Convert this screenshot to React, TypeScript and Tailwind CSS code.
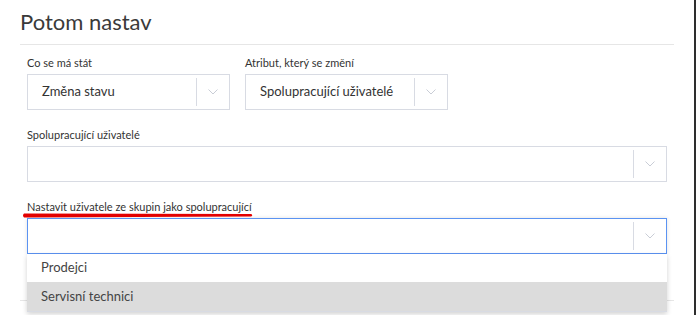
import React from "react";

const FONT = { fontFamily: "Lato, 'Noto Sans', sans-serif" };

function Chevron() {
  return (
    <svg width="10" height="6" viewBox="0 0 10 6" className="block">
      <path d="M0.5 0.5 L5 5 L9.5 0.5" fill="none" stroke="#c9cdd6" strokeWidth="1" />
    </svg>
  );
}

function Select({ value, width, focused }: { value?: string; width: string; focused?: boolean }) {
  return (
    <div
      className={
        "flex h-[36px] items-stretch bg-white border " +
        width +
        (focused ? " border-[#5b93f2] shadow-[0_0_4px_rgba(0,0,0,0.12)]" : " border-[#d8dbe3]")
      }
    >
      <div className="flex flex-1 items-center pl-[14px] text-[13px] text-[#333]">{value}</div>
      <div className="my-[3px] w-px bg-[#d8dbe3]" />
      <div className="flex w-[32px] items-center justify-center">
        <Chevron />
      </div>
    </div>
  );
}

function Field({ label, children }: { label: string; children: React.ReactNode }) {
  return (
    <div className="flex flex-col">
      <label className="mb-[4px] text-[11px] leading-[15px] text-[#333]">{label}</label>
      {children}
    </div>
  );
}

// red pen stroke under the last label
function Underline() {
  return (
    <svg width="232" height="5" viewBox="0 0 232 5" className="absolute left-[-5px] top-[14px]">
      <path d="M2 0.6 L229 0.9 Q231.5 2 229 3.6 L2 4.6 Q0 2.6 2 0.6 Z" fill="#e30000" />
    </svg>
  );
}

export default function App() {
  return (
    <div className="flex h-[315px] w-[696px] overflow-hidden bg-white" style={FONT}>
      <div className="relative w-[694px] px-[20px]">
        <div className="h-[45px] border-b border-[#e6e6e6]">
          <h1 className="pt-[7px] text-[22px] leading-[29px] text-[#3a3a3a]">Potom nastav</h1>
        </div>

        <div className="h-[256px] border-b border-[#e6e6e6] px-[7px] pt-[10px]">
          <div className="flex gap-[15px]">
            <Field label="Co se má stát">
              <Select value="Změna stavu" width="w-[203px]" />
            </Field>
            <Field label="Atribut, který se změní">
              <Select value="Spolupracující uživatelé" width="w-[203px]" />
            </Field>
          </div>

          <div className="mt-[17px]">
            <Field label="Spolupracující uživatelé">
              <Select width="w-full" />
            </Field>
          </div>

          <div className="relative mt-[17px]">
            <Field label="Nastavit uživatele ze skupin jako spolupracující">
              <Select width="w-full" focused />
            </Field>
            <Underline />

            <div className="absolute left-0 right-0 top-[55px] z-10 border-b border-[#d8dbe3] bg-white shadow-[0_2px_5px_rgba(0,0,0,0.18)]">
              <div className="flex h-[28px] items-center pl-[14px] text-[13px] text-[#444]">Prodejci</div>
              <div className="flex h-[29px] items-center bg-[#dcdcdc] pl-[14px] text-[13px] text-[#444]">
                Servisní technici
              </div>
            </div>
          </div>
        </div>
      </div>
      <div className="w-[2px] bg-[#2e2e2e]" />
    </div>
  );
}
